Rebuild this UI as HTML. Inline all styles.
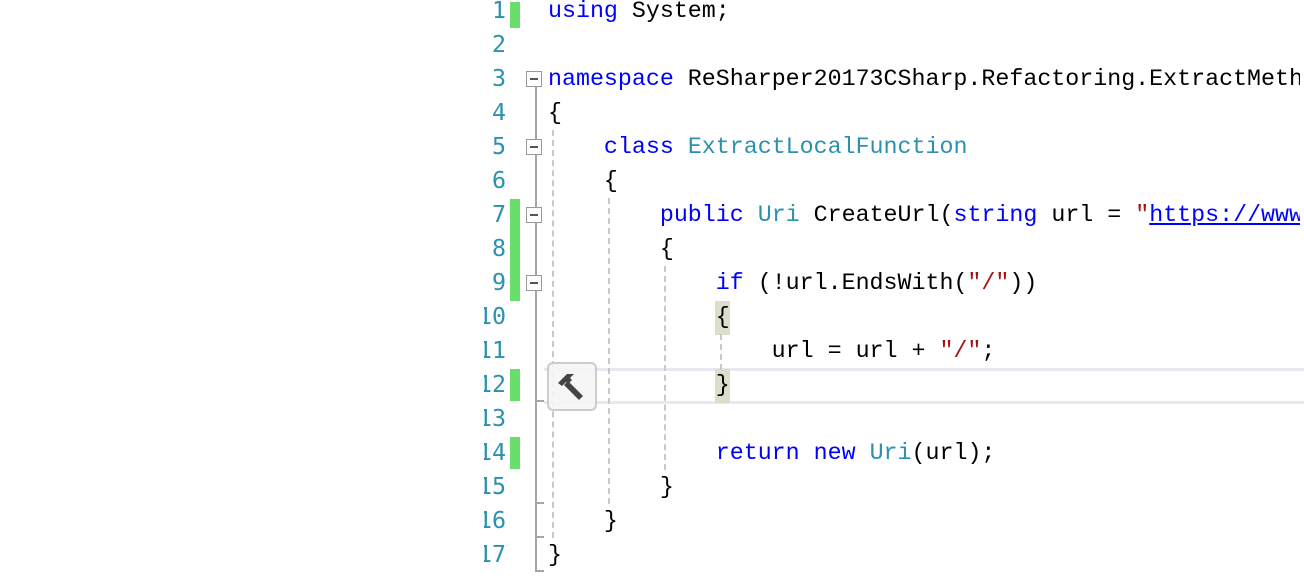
<!DOCTYPE html>
<html><head><meta charset="utf-8"><style>
html,body{margin:0;padding:0;width:1304px;height:584px;overflow:hidden;background:#fff;position:relative}
.lnwrap{position:absolute;left:484px;top:0;width:22px;height:584px;overflow:hidden}
.lnwrap .n{position:absolute;right:0;font:23.3px "DejaVu Sans Mono","Liberation Mono",monospace;color:#2b91af;line-height:34px;height:34px;white-space:nowrap}
.code{position:absolute;left:548px;top:0;width:752px;height:584px;overflow:hidden}
.l{position:absolute;left:0;font:23.3px "Liberation Mono",monospace;line-height:34px;height:34px;white-space:pre;color:#000}
.k{color:#0000ff}.t{color:#2b91af}.s{color:#a31515}.u{color:#0000ff;text-decoration:underline}
.g{position:absolute;left:510px;width:10px;background:#6ade6a}
.fb{position:absolute;left:526px;width:14px;height:14px;border:1px solid #999;background:#fff}
.fb:after{content:"";position:absolute;left:3px;top:6px;width:8px;height:2px;background:#555}
.vl{position:absolute;width:2px;background:#a5a5a5}
.tk{position:absolute;height:2px;background:#a5a5a5;width:9px;left:535px}
.dl{position:absolute;width:0;border-left:2px dashed #c8c8c8}
.bh{position:absolute;left:715px;width:15px;height:34px;background:#dbdecb}
</style></head><body>
<div style="position:absolute;left:544px;top:368px;width:760px;height:30px;border-top:3px solid #e8e8f0;border-bottom:3px solid #e8e8f0"></div>
<div class="bh" style="top:301px"></div>
<div class="bh" style="top:369px"></div>
<div class="lnwrap">
<div class="n" style="top:-6px">1</div><div class="n" style="top:28px">2</div><div class="n" style="top:62px">3</div><div class="n" style="top:96px">4</div><div class="n" style="top:130px">5</div><div class="n" style="top:164px">6</div><div class="n" style="top:198px">7</div><div class="n" style="top:232px">8</div><div class="n" style="top:266px">9</div><div class="n" style="top:300px">10</div><div class="n" style="top:334px">11</div><div class="n" style="top:368px">12</div><div class="n" style="top:402px">13</div><div class="n" style="top:436px">14</div><div class="n" style="top:470px">15</div><div class="n" style="top:504px">16</div><div class="n" style="top:538px">17</div>
</div>
<div class="g" style="top:2px;height:26px"></div>
<div class="g" style="top:199px;height:102px"></div>
<div class="g" style="top:369px;height:32px"></div>
<div class="g" style="top:437px;height:32px"></div>
<div class="vl" style="left:535px;top:86px;height:486px"></div>
<div class="tk" style="top:400px"></div>
<div class="tk" style="top:502px"></div>
<div class="tk" style="top:536px"></div>
<div class="tk" style="top:570px"></div>
<div class="fb" style="top:71px"></div>
<div class="fb" style="top:139px"></div>
<div class="fb" style="top:207px"></div>
<div class="fb" style="top:275px"></div>
<div class="dl" style="left:552px;top:130px;height:408px"></div>
<div class="dl" style="left:608px;top:198px;height:306px"></div>
<div class="dl" style="left:664px;top:266px;height:204px"></div>
<div class="dl" style="left:720px;top:334px;height:36px"></div>
<div class="code">
<div class="l" style="top:-6px"><span class="k">using</span> System;</div>
<div class="l" style="top:62px"><span class="k">namespace</span> ReSharper20173CSharp.Refactoring.ExtractMethod</div>
<div class="l" style="top:96px">{</div>
<div class="l" style="top:130px">    <span class="k">class</span> <span class="t">ExtractLocalFunction</span></div>
<div class="l" style="top:164px">    {</div>
<div class="l" style="top:198px">        <span class="k">public</span> <span class="t">Uri</span> CreateUrl(<span class="k">string</span> url = <span class="s">"</span><span class="u">https://www</span></div>
<div class="l" style="top:232px">        {</div>
<div class="l" style="top:266px">            <span class="k">if</span> (!url.EndsWith(<span class="s">"/"</span>))</div>
<div class="l" style="top:300px">            {</div>
<div class="l" style="top:334px">                url = url + <span class="s">"/"</span>;</div>
<div class="l" style="top:368px">            }</div>
<div class="l" style="top:436px">            <span class="k">return</span> <span class="k">new</span> <span class="t">Uri</span>(url);</div>
<div class="l" style="top:470px">        }</div>
<div class="l" style="top:504px">    }</div>
<div class="l" style="top:538px">}</div>
</div>
<div style="position:absolute;left:547px;top:362px;width:46px;height:45px;border:2px solid #ccc;border-radius:6px;background:rgba(245,245,245,0.9)">
<svg width="46" height="45" viewBox="0 0 46 45"><path d="M9 19 L18 10 L25 10 L21 14 L23 16 L19 20 L17 18 L13 22 Z" fill="#444"/><path d="M19 17 L34 32 L30 36 L15 21 Z" fill="#444"/></svg>
</div>
</body></html>
